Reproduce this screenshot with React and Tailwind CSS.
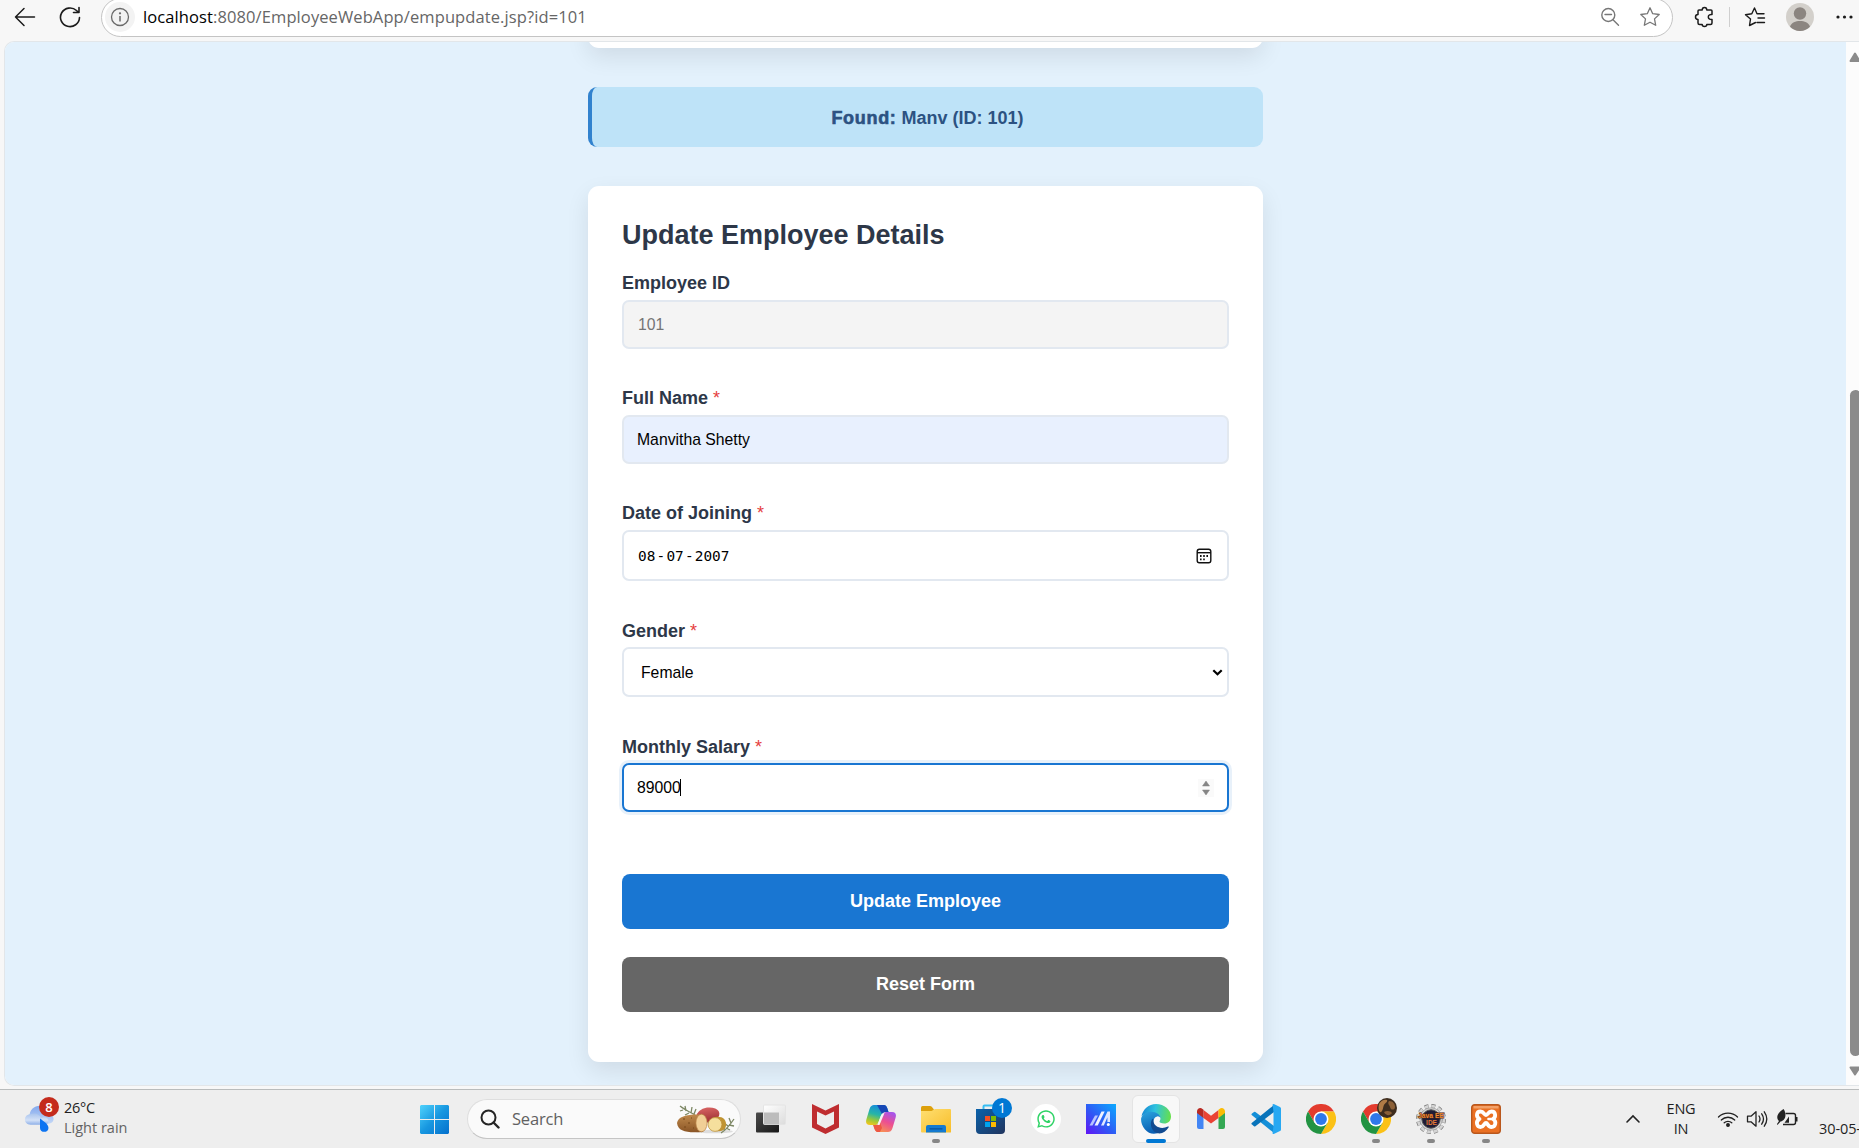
import React from "react";
import { FaWhatsapp } from "react-icons/fa";

const UI = "font-['Open_Sans','Noto_Sans',sans-serif]";

function Toolbar() {
  return (
    <header className={"flex h-[41px] shrink-0 items-start bg-[#f7f7f7] " + UI}>
      <div className="flex h-[34px] w-[101px] shrink-0 items-center pl-[14px]">
        <svg width="22" height="20" viewBox="0 0 22 20" fill="none" stroke="#1b1b1b" strokeWidth="1.5" strokeLinecap="round" strokeLinejoin="round">
          <path d="M20.5 10H1.5M10 1.5 1.5 10l8.500 8.500" />
        </svg>
        <svg className="ml-[22px]" width="24" height="22" viewBox="0 0 24 22" fill="none" stroke="#1b1b1b" strokeWidth="1.6" strokeLinecap="round" strokeLinejoin="round">
          <path d="M21.500 11.500A9.500 9.300 0 1 1 18.500 4.500L20.800 6.500M21 1.500V6.500H15.500" />
        </svg>
      </div>
      <div className="-mt-0.5 flex h-[39px] w-[1572px] shrink-0 items-center rounded-full border border-[#c4c4c4] bg-white pl-[3px]">
        <div className="-mt-px flex h-[30px] w-[30px] items-center justify-center rounded-full bg-[#f3f3f3]">
          <svg width="20" height="20" viewBox="0 0 20 20" fill="none" stroke="#6a6a6a" strokeWidth="1.300">
            <circle cx="10" cy="10" r="8.500" />
            <path d="M10 9v5.500" strokeWidth="1.500" />
            <circle cx="10" cy="6.300" r=".5" />
          </svg>
        </div>
        <div className="-mt-px ml-[8px] flex-1 whitespace-pre text-[16.500px] tracking-[0.1px] text-[#666]">
          <span className="text-black">localhost</span>:8080/EmployeeWebApp/empupdate.jsp?id=101
        </div>
        <svg className="-mt-px" width="20" height="20" viewBox="0 0 20 20" fill="none" stroke="#777" strokeWidth="1.400" strokeLinecap="round">
          <circle cx="8.300" cy="8" r="6.500" />
          <path d="M5 7.500h6.500M13 12.800l5.500 5.500" />
        </svg>
        <svg className="-mt-px mr-[11px] ml-[19px]" width="22" height="22" viewBox="0 0 22 22" fill="none" stroke="#777" strokeWidth="1.300" strokeLinejoin="round">
          <path d="m11 1.800 2.700 5.900 6.500.8-4.700 4.400 1.200 6.400L11 16.200l-5.700 3.100 1.200-6.400L1.800 8.500l6.500-.8z" />
        </svg>
      </div>
      <div className="flex h-[34px] flex-1 items-center pl-[21px]">
        <svg width="21" height="22" viewBox="0 0 21 22" fill="none" stroke="#1b1b1b" strokeWidth="1.500" strokeLinejoin="round">
          <path d="M5 4h3.200c0-1.500.9-2.600 2.300-2.600S12.800 2.500 12.800 4H17q1 0 1 1v3.600c-1.500-.3-3.700.3-3.700 2.400s2.200 2.700 3.700 2.400V17q0 1.500-1.500 1.500h-3.700c0 1.200-.9 2-2.300 2s-2.300-.8-2.300-2H5.500Q4 18.500 4 17v-3.600c-1.500 0-2.500-.9-2.500-2.400S2.500 8.600 4 8.600V5q0-1 1-1z" />
        </svg>
        <div className="ml-[14px] h-5 w-px bg-[#cfcfcf]" />
        <svg className="ml-[14px]" width="22" height="22" viewBox="0 0 22 22" fill="none" stroke="#1b1b1b" strokeWidth="1.400" strokeLinejoin="round" strokeLinecap="round">
          <path d="M11.500 16.500 5.500 19.500l1-6.500L1.500 8.700l6.300-.9L10.500 2l2.500 5.800h7M14 12h6.500M13 16.500h7.500" />
        </svg>
        <svg className="ml-[20px]" width="28" height="28" viewBox="0 0 28 28">
          <circle cx="14" cy="14" r="14" fill="#d3d0cb" />
          <circle cx="14" cy="10.500" r="6.200" fill="#8b8580" />
          <path d="M4 23.800C5.500 19.500 9.500 18 14 18s8.500 1.500 10 5.800A14 14 0 0 1 4 23.800z" fill="#8b8580" />
        </svg>
        <svg className="ml-[21px]" width="20" height="6" viewBox="0 0 20 6" fill="#1b1b1b">
          <circle cx="3" cy="3" r="1.600" /><circle cx="9.500" cy="3" r="1.600" /><circle cx="16" cy="3" r="1.600" />
        </svg>
      </div>
    </header>
  );
}

function Label({ children, required }) {
  return (
    <div className="h-[24px] text-[18px] leading-[21px] font-bold text-[#2d3748]">
      {children}
      {required && <span className="font-normal text-[#e53e3e]"> *</span>}
    </div>
  );
}

const BOX = "flex w-full shrink-0 items-center rounded-[7px] border-2 text-[15.75px] ";

function Page() {
  return (
    <main className="flex h-[1045px] shrink-0 pl-[4px]">
      <div className="flex h-full w-full overflow-hidden rounded-l-[10px] border border-r-0 border-[#e2e6e9] bg-[#fcfcfc]">
        <div className="flex w-[1841px] shrink-0 flex-col overflow-hidden bg-[#e3f1fc] pl-[583px] font-['Liberation_Sans',Arial,sans-serif]">
          <div className="-mt-[30px] h-[36px] w-[675px] shrink-0 rounded-[11px] bg-white shadow-[0_9px_23px_rgba(0,0,0,0.09)]" />
          <div className="mt-[39px] flex h-[60px] w-[675px] shrink-0 items-center justify-center rounded-[9px] border-l-[4.500px] border-[#3182ce] bg-[#bee3f8] pt-[2px] text-[18px] font-bold text-[#2c5282]">
            <strong className="mr-[5px] tracking-[0.7px] [-webkit-text-stroke:0.6px_#2c5282]">Found:</strong>
            <span>Manv (ID: 101)</span>
          </div>
          <section className="mt-[39px] flex h-[876px] w-[675px] shrink-0 flex-col rounded-[11px] bg-white px-[34px] pt-[34px] shadow-[0_9px_23px_rgba(0,0,0,0.09)]">
            <h2 className="h-[53px] text-[27px] leading-[31px] font-bold text-[#2d3748]">Update Employee Details</h2>
            <Label>Employee ID</Label>
            <div className={BOX + "mt-[3px] h-[49px] border-[#e2e8f0] bg-[#f4f4f4] pl-[14px] text-[#757575]"}>101</div>
            <div className="h-[39px]" />
            <Label required>Full Name</Label>
            <div className={BOX + "mt-[3px] h-[49px] border-[#e2e8f0] bg-[#e8f0fe] pl-[13px] text-black"}>Manvitha Shetty</div>
            <div className="h-[39px]" />
            <Label required>Date of Joining</Label>
            <div className={BOX + "mt-[3px] h-[51px] border-[#e2e8f0] bg-white pr-[15px] pl-[14px] text-black"}>
              <div className="flex flex-1 gap-[1.200px] pt-[3px] font-['DejaVu_Sans_Mono',monospace] text-[14.400px]">
                <span>08</span><span>-</span><span>07</span><span>-</span><span>2007</span>
              </div>
              <svg width="16" height="16" viewBox="0 0 16 16" fill="none" stroke="#111" strokeWidth="1.400">
                <rect x="1.200" y="1.200" width="13.600" height="13.600" rx="2.200" />
                <path d="M1 4.700h14" />
                <path d="M4 8h1.600M7.200 8h1.600M10.400 8H12M4 11.300h1.600M7.200 11.300h1.600" strokeWidth="1.800" />
              </svg>
            </div>
            <div className="h-[40px]" />
            <Label required>Gender</Label>
            <div className={BOX + "mt-[2px] h-[50px] border-[#e2e8f0] bg-white pr-[4px] pl-[17px] text-black"}>
              <span className="flex-1 pt-[2px]">Female</span>
              <svg width="11" height="7" viewBox="0 0 11 7" fill="none" stroke="#000" strokeWidth="2.200"><path d="m1.300 1.200 4.200 4 4.200-4" /></svg>
            </div>
            <div className="h-[40px]" />
            <Label required>Monthly Salary</Label>
            <div className={BOX + "mt-[2px] h-[49px] border-[#1976d2] bg-white pr-[13px] pl-[13px] text-black shadow-[0_0_0_3px_rgba(25,118,210,0.1)]"}>
              <span>89000</span>
              <span className="-ml-px h-[17px] w-[1.500px] bg-black" />
              <span className="flex-1" />
              <svg width="16" height="18" viewBox="0 0 16 18"><rect width="16" height="18" fill="#fafafa" /><path d="M8 2l3.500 5H4.500zM8 16 4.500 11h7z" fill="#858585" stroke="#858585" strokeWidth=".5" strokeLinejoin="round" /></svg>
            </div>
            <div className="mt-[62px] flex h-[55px] items-center justify-center rounded-[8px] bg-[#1976d2] text-[18px] font-bold text-white">Update Employee</div>
            <div className="mt-[28px] flex h-[55px] items-center justify-center rounded-[8px] bg-[#666] text-[18px] font-bold text-white">Reset Form</div>
          </section>
        </div>
        <div className="flex w-[18px] shrink-0 flex-col items-center pt-[10px]">
          <svg className="shrink-0" width="12" height="10" viewBox="0 0 12 10"><path d="M6 1.500 10.500 9h-9z" fill="#8b8b8b" stroke="#8b8b8b" strokeWidth="2" strokeLinejoin="round" /></svg>
          <div className="mt-[328px] h-[666px] w-[11px] shrink-0 rounded-full bg-[#8b8b8b]" />
          <svg className="mt-[10px] shrink-0" width="12" height="10" viewBox="0 0 12 10"><path d="M6 8.500 10.500 1.500h-9z" fill="#8b8b8b" stroke="#8b8b8b" strokeWidth="2" strokeLinejoin="round" /></svg>
        </div>
      </div>
    </main>
  );
}

function Potatoes() {
  return (
    <svg width="60" height="30" viewBox="0 0 60 30">
      <defs>
        <linearGradient id="pb" x1="0" y1="0" x2="0" y2="1"><stop stopColor="#c08a4c" /><stop offset="1" stopColor="#8a5526" /></linearGradient>
        <linearGradient id="pr" x1="0" y1="0" x2="0" y2="1"><stop stopColor="#d66262" /><stop offset="1" stopColor="#9c2f32" /></linearGradient>
      </defs>
      <ellipse cx="38" cy="26.500" rx="19" ry="1.800" fill="#ddd" />
      <g stroke="#7c8764" strokeWidth="1.300" fill="none">
        <path d="M4 1c5 4 10 6 15 9M7 5l-3 1M10 6 9 1M13 8l-4 2M15 8l1-6M18 9l2-5" />
        <path d="M45 28c5-3 9-8 13-14M49 24l-5-1M52 21l-4-3M53 20l5 1M55 18l-2-5M50 23l4 2" />
      </g>
      <ellipse cx="32" cy="10" rx="11.500" ry="7.500" fill="url(#pr)" transform="rotate(-8 32 10)" />
      <path d="M1 18C2 11 12 9 25 9.500c6 0 6 17 1 17.500C12 28 2 27 1 18z" fill="url(#pb)" />
      <ellipse cx="25.500" cy="18" rx="5.600" ry="8.800" fill="#f1cf96" stroke="#b78145" strokeWidth=".7" />
      <path d="M36 13c8-3 15 0 14 8-1 5-7 6-11 5z" fill="#c09432" />
      <circle cx="39" cy="19.500" r="6.900" fill="#f5df9d" stroke="#b88b35" strokeWidth=".7" />
      <path d="M7 14h2M12 18h2M15 13h1M8 22h2M17 23h1" stroke="#764818" />
    </svg>
  );
}

function Chrome() {
  return (
    <svg width="30" height="30" viewBox="0 0 30 30">
      <path d="M2 7.500A15 15 0 0 1 28 7.500H15L8.500 18.700z" fill="#e33b2e" />
      <path d="M28 7.500A15 15 0 0 1 15 30L21.500 18.700 15 7.500z" fill="#fbc116" />
      <path d="M2 7.500A15 15 0 0 0 15 30L21.500 18.700H8.500z" fill="#229342" />
      <circle cx="15" cy="15" r="7.500" fill="#fff" />
      <circle cx="15" cy="15" r="5.900" fill="#2f78ea" />
    </svg>
  );
}

function Edge() {
  return (
    <svg width="30" height="30" viewBox="0 0 30 30">
      <defs>
        <linearGradient id="e1" x1="0" y1=".4" x2="1" y2=".5"><stop stopColor="#1687d4" /><stop offset=".45" stopColor="#2fc2df" /><stop offset="1" stopColor="#66e04b" /></linearGradient>
        <linearGradient id="e2" x1="0" y1="0" x2=".3" y2="1"><stop stopColor="#2ba4df" /><stop offset="1" stopColor="#0a60b4" /></linearGradient>
      </defs>
      <path d="M.5 12.500C1.800 5 7.800 0 15 0c8.300 0 15 6 15 12.500 0 4.500-3 7-6.800 7-3.300 0-4.800-1.200-4.700-2 .1-.7 1-1.300 1-3C19.500 11 15 9 10 9 5.500 9 2 10.500.5 12.500z" fill="url(#e1)" />
      <path d="M.2 14C2 9.500 5.500 7.800 10 7.800c5.500 0 9.600 3 9.600 6.900-.6-1.800-2-2.500-3.300-2.300-3 .4-4.600 4-3.600 7.600 1 4 5 6.500 7 7.500C15 31 8 30.500 4 25.500.8 21.500-.3 17.500.2 14z" fill="url(#e2)" />
      <path d="M11 15.500C8 20 11 29.500 18.500 29.500c3.500-.5 7-2.500 9.200-6.300.4-.7-.2-1-.8-.7C20 26 12.500 22.500 12.300 16.500 12.500 14 11.800 14.500 11 15.500z" fill="#114b91" />
    </svg>
  );
}

function Xampp() {
  return (
    <svg width="30" height="30" viewBox="0 0 30 30">
      <rect x=".7" y=".7" width="28.600" height="28.600" rx="3" fill="#ea7023" stroke="#b9571c" strokeWidth="1.400" />
      <path d="M2.500 2h25v2.500h-25z" fill="#f3a067" />
      <g fill="none" stroke="#fff" strokeWidth="3.800" strokeLinejoin="round" strokeLinecap="round">
        <path d="M8.500 15C4.500 12.500 5.500 7.500 9.500 7.500c3.500 0 3.500 3.500 5.500 3.500s2-3.500 5.500-3.500c4 0 5 5 1.500 7.500 4 2.500 2.500 8-1.500 8S17 19 15 19s-2 4-5.500 4-5.500-5.500-1-8z" />
        <path d="M17.500 15h4" strokeWidth="2.600" />
      </g>
    </svg>
  );
}

function Java() {
  return (
    <svg width="30" height="30" viewBox="0 0 30 30">
      <circle cx="15" cy="15" r="13" fill="none" stroke="#777" strokeWidth="4" strokeDasharray="3.900 2.907" />
      <circle cx="15" cy="15" r="12.900" fill="none" stroke="#d4d4d4" strokeWidth="2.800" strokeDasharray="3.700 3.055" />
      <circle cx="15" cy="15" r="11.200" fill="#d3d3d3" stroke="#999" strokeWidth=".6" />
      <circle cx="15" cy="15" r="9.200" fill="#1f1c36" stroke="#555" />
      <text x="15" y="13.800" textAnchor="middle" textLength="26" lengthAdjust="spacingAndGlyphs" fontFamily="Liberation Sans" fontWeight="bold" fontSize="7" fill="#ef8a35" stroke="#4d2110" strokeWidth=".9" paintOrder="stroke">Java EE</text>
      <text x="15.500" y="20.500" textAnchor="middle" fontFamily="Liberation Sans" fontWeight="bold" fontSize="6.500" fill="#e57b38">IDE</text>
    </svg>
  );
}

function Slot({ children, running, active, overlay }) {
  return (
    <div className="relative flex h-[48px] w-[55px] shrink-0 items-center justify-center">
      <div className={active ? "flex h-[48px] w-[48px] items-center justify-center rounded-[6px] border border-[#e4e4e4] bg-[#f8f8f8]" : "flex h-[48px] w-[48px] items-center justify-center"}>
        {children}
      </div>
      {overlay}
      {running && <span className="absolute bottom-[0px] left-[23.500px] h-[4px] w-[8px] rounded-full bg-[#868686]" />}
      {active && <span className="absolute bottom-[0px] left-[17.500px] h-[4px] w-[20px] rounded-full bg-[#0078d4]" />}
    </div>
  );
}

function Taskbar() {
  return (
    <footer className={"flex h-[59px] shrink-0 border-t border-[#b9bcbc] bg-[#eee] pt-[5px] text-[#1f1f1f] " + UI}>
      <div className="flex w-[407px] shrink-0 pl-[24px]">
        <div className="relative h-[44px] w-[40px]">
          <svg className="mt-[7px]" width="32" height="34" viewBox="0 0 34 34">
            <defs>
              <linearGradient id="c1" x1="0" y1="0" x2="0" y2="1"><stop stopColor="#82a8ed" /><stop offset="1" stopColor="#c4d8f7" /></linearGradient>
              <linearGradient id="c2" x1="0" y1="0" x2="0" y2="1"><stop stopColor="#a8c3ed" /><stop offset=".6" stopColor="#d3e1f7" /><stop offset="1" stopColor="#8fb0e8" /></linearGradient>
            </defs>
            <path d="M6 16C5 7 11 3 17 3s10 4 10 9c7 2 5 10-1 10H10z" fill="url(#c1)" />
            <path d="M7 23C-1 23-1 12 7 12c4-2 9-1 11 4 4-2 8 0 8 3s-2 4-5 4z" fill="url(#c2)" />
            <path d="M17 16.500c4 3 9 6 9 10 0 5.500-9 5.500-9 0z" fill="#0c74f2" />
          </svg>
          <span className="absolute top-[2px] left-[15px] flex h-[20px] w-[20px] items-center justify-center rounded-full bg-[#c42b1c] text-[13px] leading-none font-semibold text-white">8</span>
        </div>
        <div className="pt-[3px] text-[14.500px] leading-[20px]">
          <div className="tracking-[-0.3px]">26°C</div>
          <div className="text-[#636363]">Light rain</div>
        </div>
      </div>
      <Slot>
        <svg width="29" height="29" viewBox="0 0 29 29">
          <defs><linearGradient id="w" x1="0" y1="0" x2="29" y2="29" gradientUnits="userSpaceOnUse"><stop stopColor="#4fd2fc" /><stop offset=".5" stopColor="#1797e0" /><stop offset="1" stopColor="#0470cd" /></linearGradient></defs>
          <path d="M1 0h13v14H0V1zM15 0h13l1 1v13H15zM0 15h14v14H1l-1-1zM15 15h14v13l-1 1H15z" fill="url(#w)" />
        </svg>
      </Slot>
      <div className="mt-[4px] ml-[5px] flex h-[40px] w-[274px] shrink-0 items-center rounded-full border border-b-[#c5c5c5] border-[#dedede] bg-[#fafafa] pl-[12px]">
        <svg width="20" height="20" viewBox="0 0 20 20" fill="none" stroke="#252525" strokeWidth="2"><circle cx="8.500" cy="8.500" r="7" /><path d="m13.500 13.500 5 5" strokeWidth="2.400" strokeLinecap="round" /></svg>
        <span className="ml-[12px] flex-1 pt-px text-[16.500px] tracking-[-0.2px] text-[#616161]">Search</span>
        <div className="mr-[4px] pt-px"><Potatoes /></div>
      </div>
      <div className="flex w-[771px] shrink-0 pl-[2px]">
        <Slot>
          <svg width="30" height="30" viewBox="0 0 30 30">
            <defs><linearGradient id="tv" x1="0" y1="0" x2="1" y2="1"><stop stopColor="#4b4b4b" /><stop offset="1" stopColor="#171717" /></linearGradient><linearGradient id="tv2" x1="0" y1="0" x2="1" y2="1"><stop stopColor="#fff" /><stop offset="1" stopColor="#dcdcdc" /></linearGradient></defs>
            <rect x="0" y="8.500" width="23" height="20" rx="1" fill="url(#tv)" />
            <rect x="7.500" y="1" width="22" height="19.500" rx="1" fill="url(#tv2)" stroke="#e4e4e4" />
            <path d="M8 8.500h15v12H8z" fill="#bcbcbc" />
          </svg>
        </Slot>
        <Slot>
          <svg width="27" height="30" viewBox="0 0 27 30"><path d="M0 0 13.500 6.500 27 0v23.500L13.500 30 0 23.500zM5 7.500V20l8.500 4.500L22 20V7.500l-8.500 4z" fill="#bf2d30" fillRule="evenodd" /></svg>
        </Slot>
        <Slot>
          <svg width="30" height="28" viewBox="0 0 30 28">
            <defs>
              <linearGradient id="p1" x1=".5" y1="0" x2=".2" y2="1"><stop stopColor="#168bdc" /><stop offset=".45" stopColor="#26b5a8" /><stop offset=".75" stopColor="#9bc839" /><stop offset="1" stopColor="#f5c51b" /></linearGradient>
              <linearGradient id="p2" x1=".7" y1="0" x2=".2" y2="1"><stop stopColor="#a855e9" /><stop offset=".45" stopColor="#ec4f91" /><stop offset="1" stopColor="#fa9a4b" /></linearGradient>
            </defs>
            <path d="M8 0h10c3 0 3.500 4 4.500 7h-3c-3 0-4 2-5 5l-2 5c-1 2.500-2 3-4 3H4c-4 0-4.500-3-3.500-6l3-10C4.500 1 6 0 8 0z" fill="url(#p1)" />
            <path d="M11 0h7c3 0 3.500 4 4.500 7h-3c-1 0-2.500.5-3.500 2z" fill="#1647b5" />
            <path d="M22 27H12c-3 0-3.500-4-4.500-7h2c3 0 4-2 5-5l2-5c1-2 2-3 4-3H26c4 0 4.500 3 3.500 6l-3 10c-1 3-2.500 4-4.500 4z" fill="url(#p2)" />
            <path d="M14 27h-3c-2.500-1-3-5-4-7h3c2 0 3-1 4-3l2 6z" fill="#ed5844" />
            <path d="m18.500 8-5 12h-2l3.200-9c1-2 2-3 3.800-3z" fill="#f4f4f4" />
          </svg>
        </Slot>
        <Slot running>
          <svg width="30" height="27" viewBox="0 0 30 27">
            <defs><linearGradient id="f" x1="0" y1="0" x2="1" y2="1"><stop stopColor="#ffdf72" /><stop offset="1" stopColor="#f8bd29" /></linearGradient></defs>
            <path d="M0 1.500Q0 0 1.500 0H9q1 0 1.700.8L13 3.500V8H0z" fill="#dda00c" />
            <path d="M0 5h10.500L14 3h15q1 0 1 1v22q0 .5-.5.5H1q-1 0-1-1z" fill="url(#f)" />
            <path d="M5 26.500V21q0-2 2-2h16q2 0 2 2v5.500z" fill="#147ad0" />
            <path d="M9 22.800h12" stroke="#07529c" strokeWidth="1.300" strokeLinecap="round" />
          </svg>
        </Slot>
        <Slot overlay={<span className="absolute top-[3px] left-[29px] flex h-[20px] w-[20px] items-center justify-center rounded-full bg-[#0078d4] text-[14px] leading-none text-white">1</span>}>
          <svg width="29" height="30" viewBox="0 0 29 30">
            <defs><linearGradient id="s" x1="0" y1="0" x2="1" y2="1"><stop stopColor="#0a62ab" /><stop offset="1" stopColor="#21345d" /></linearGradient></defs>
            <path d="M7.500 6V2.500q0-1 1-1h12q1 0 1 1V6" fill="none" stroke="#35bdf3" strokeWidth="2" />
            <path d="M0 5h29v21q0 4-4 4H4q-4 0-4-4z" fill="url(#s)" />
            <path d="M9 12h5v5H9z" fill="#f25022" /><path d="M15 12h5v5h-5z" fill="#7fba00" /><path d="M9 18h5v5H9z" fill="#00a4ef" /><path d="M15 18h5v5h-5z" fill="#ffb900" />
          </svg>
        </Slot>
        <Slot><div className="flex h-[30px] w-[30px] items-center justify-center rounded-full bg-white text-[20px] text-[#2fd366]"><FaWhatsapp /></div></Slot>
        <Slot>
          <svg width="30" height="30" viewBox="0 0 30 30">
            <defs><linearGradient id="m" x1="1" y1="0" x2="0" y2="1"><stop stopColor="#0baaff" /><stop offset=".55" stopColor="#2f59f5" /><stop offset="1" stopColor="#6114f5" /></linearGradient></defs>
            <path d="M0 0h30v30H0z" fill="url(#m)" />
            <path d="m3.500 21.500 5.500-10h3l-5.500 10z" fill="#b9c4ff" />
            <path d="m8.500 21.500 7-14h3.200l-7 14z" fill="#f1f4ff" />
            <path d="m15 21.500 6.500-14H24V18h-2.600v-4.800l-3.600 8.300z" fill="#dfe7ff" />
            <circle cx="22.300" cy="20.500" r="1.500" fill="#fff" />
          </svg>
        </Slot>
        <Slot active><Edge /></Slot>
        <Slot>
          <svg width="28" height="22" viewBox="0 0 28 22">
            <path d="M0 4v15q0 2 2 2h4.500V9z" fill="#4285f4" /><path d="M21.500 9v12H26q2 0 2-2V4z" fill="#34a853" />
            <path d="M6.500 2v8l7.500 5.600 7.500-5.600V2L14 7.700z" fill="#ea4335" /><path d="M0 5v-1.500C0 .5 3.200-1 5.500.9l1 .8V10z" fill="#b92922" /><path d="M28 5v-1.500C28 .5 24.800-1 22.500.9l-1 .8V10z" fill="#fbbc04" />
          </svg>
        </Slot>
        <Slot>
          <svg width="30" height="30" viewBox="0 0 30 30">
            <path d="M1 9.500 3 8q.7-.5 1.400 0L23 22v7L.7 11q-.7-.8.3-1.500z" fill="#148fd8" />
            <path d="m1 20.500 2 1.700q.7.500 1.400 0L23 8V1L.7 19q-.7.800.3 1.500z" fill="#0873ba" />
            <path d="M21.500.6Q22.300-.2 23.300.2L29 3q1 .5 1 1.500v21q0 1-1 1.500l-5.700 2.800q-1 .4-1.800-.4L22.500 22V8z" fill="#27a8f2" />
          </svg>
        </Slot>
        <Slot><Chrome /></Slot>
        <Slot running overlay={
          <svg className="absolute top-[3px] left-[28.500px]" width="20" height="20" viewBox="0 0 20 20">
            <circle cx="10" cy="10" r="10" fill="#3e2d1e" />
            <path d="M2 6c2-4 6-5 8-4 1 2-2 3-3 5s-1 6-3 7-3-4-2-8z" fill="#b07b45" />
            <path d="M12 3c4 0 6 3 6 6s-3 3-4 2-1-3-2-4-1-3 0-4zM7 14c3-2 7-1 8 1-2 3-6 3-8-1z" fill="#8c6037" />
          </svg>}>
          <Chrome />
        </Slot>
        <Slot running><Java /></Slot>
        <Slot running><Xampp /></Slot>
      </div>
      <div className="flex w-[350px] shrink-0 pl-[113px]">
        <svg className="mt-[19px] shrink-0" width="16" height="10" viewBox="0 0 16 10" fill="none" stroke="#222" strokeWidth="1.600" strokeLinecap="round"><path d="m2 8 6-6 6 6" /></svg>
        <div className="ml-[22px] w-[36px] shrink-0 pt-[4px] text-center text-[14.500px] leading-[20px] tracking-[-0.2px]"><div>ENG</div><div>IN</div></div>
        <svg className="mt-[15px] ml-[18px] shrink-0" width="22" height="18" viewBox="0 0 22 18" fill="none" stroke="#222" strokeWidth="1.300" strokeLinecap="round"><path d="M1.500 7a13.500 13.500 0 0 1 19 0M4.300 10a9.500 9.500 0 0 1 13.400 0M7.200 12.800a5.500 5.500 0 0 1 7.600 0" /><circle cx="11" cy="15" r="1.300" fill="#222" /></svg>
        <svg className="mt-[15px] ml-[7px] shrink-0" width="23" height="18" viewBox="0 0 23 18" fill="none" stroke="#222" strokeWidth="1.300" strokeLinecap="round" strokeLinejoin="round"><path d="M1.500 6.200H5L10 1.800v14.400L5 11.800H1.500zM13 6q2 3 0 6M15.700 3.800q3.600 5.200 0 10.400M18.300 1.800q5 7.200 0 14.400" /></svg>
        <svg className="mt-[14px] ml-[7px] shrink-0" width="23" height="20" viewBox="0 0 23 20"><path d="M9.500 4.500h8q2 0 2 2v7q0 2-2 2H7" fill="none" stroke="#222" strokeWidth="1.400" /><path d="M20 8h1.500v4.500H20z" fill="#222" /><path d="M8.500 13.800 13 7.500v6.300z" fill="#222" /><path d="M7.500 0c3 4 3 11-3 12.500L1.500 16 1 15l2-3C-1 8 2.500 3 7.500 0z" fill="#222" /></svg>
        <span className="mt-[24px] ml-[20px] text-[14.500px] leading-[20px] tracking-[-0.1px] whitespace-nowrap">30-05-</span>
      </div>
    </footer>
  );
}

export default function App() {
  return (
    <div className="flex h-[1148px] w-[1859px] flex-col overflow-hidden bg-[#f7f7f7]">
      <Toolbar />
      <Page />
      <div className="h-[3px] shrink-0" />
      <Taskbar />
    </div>
  );
}
